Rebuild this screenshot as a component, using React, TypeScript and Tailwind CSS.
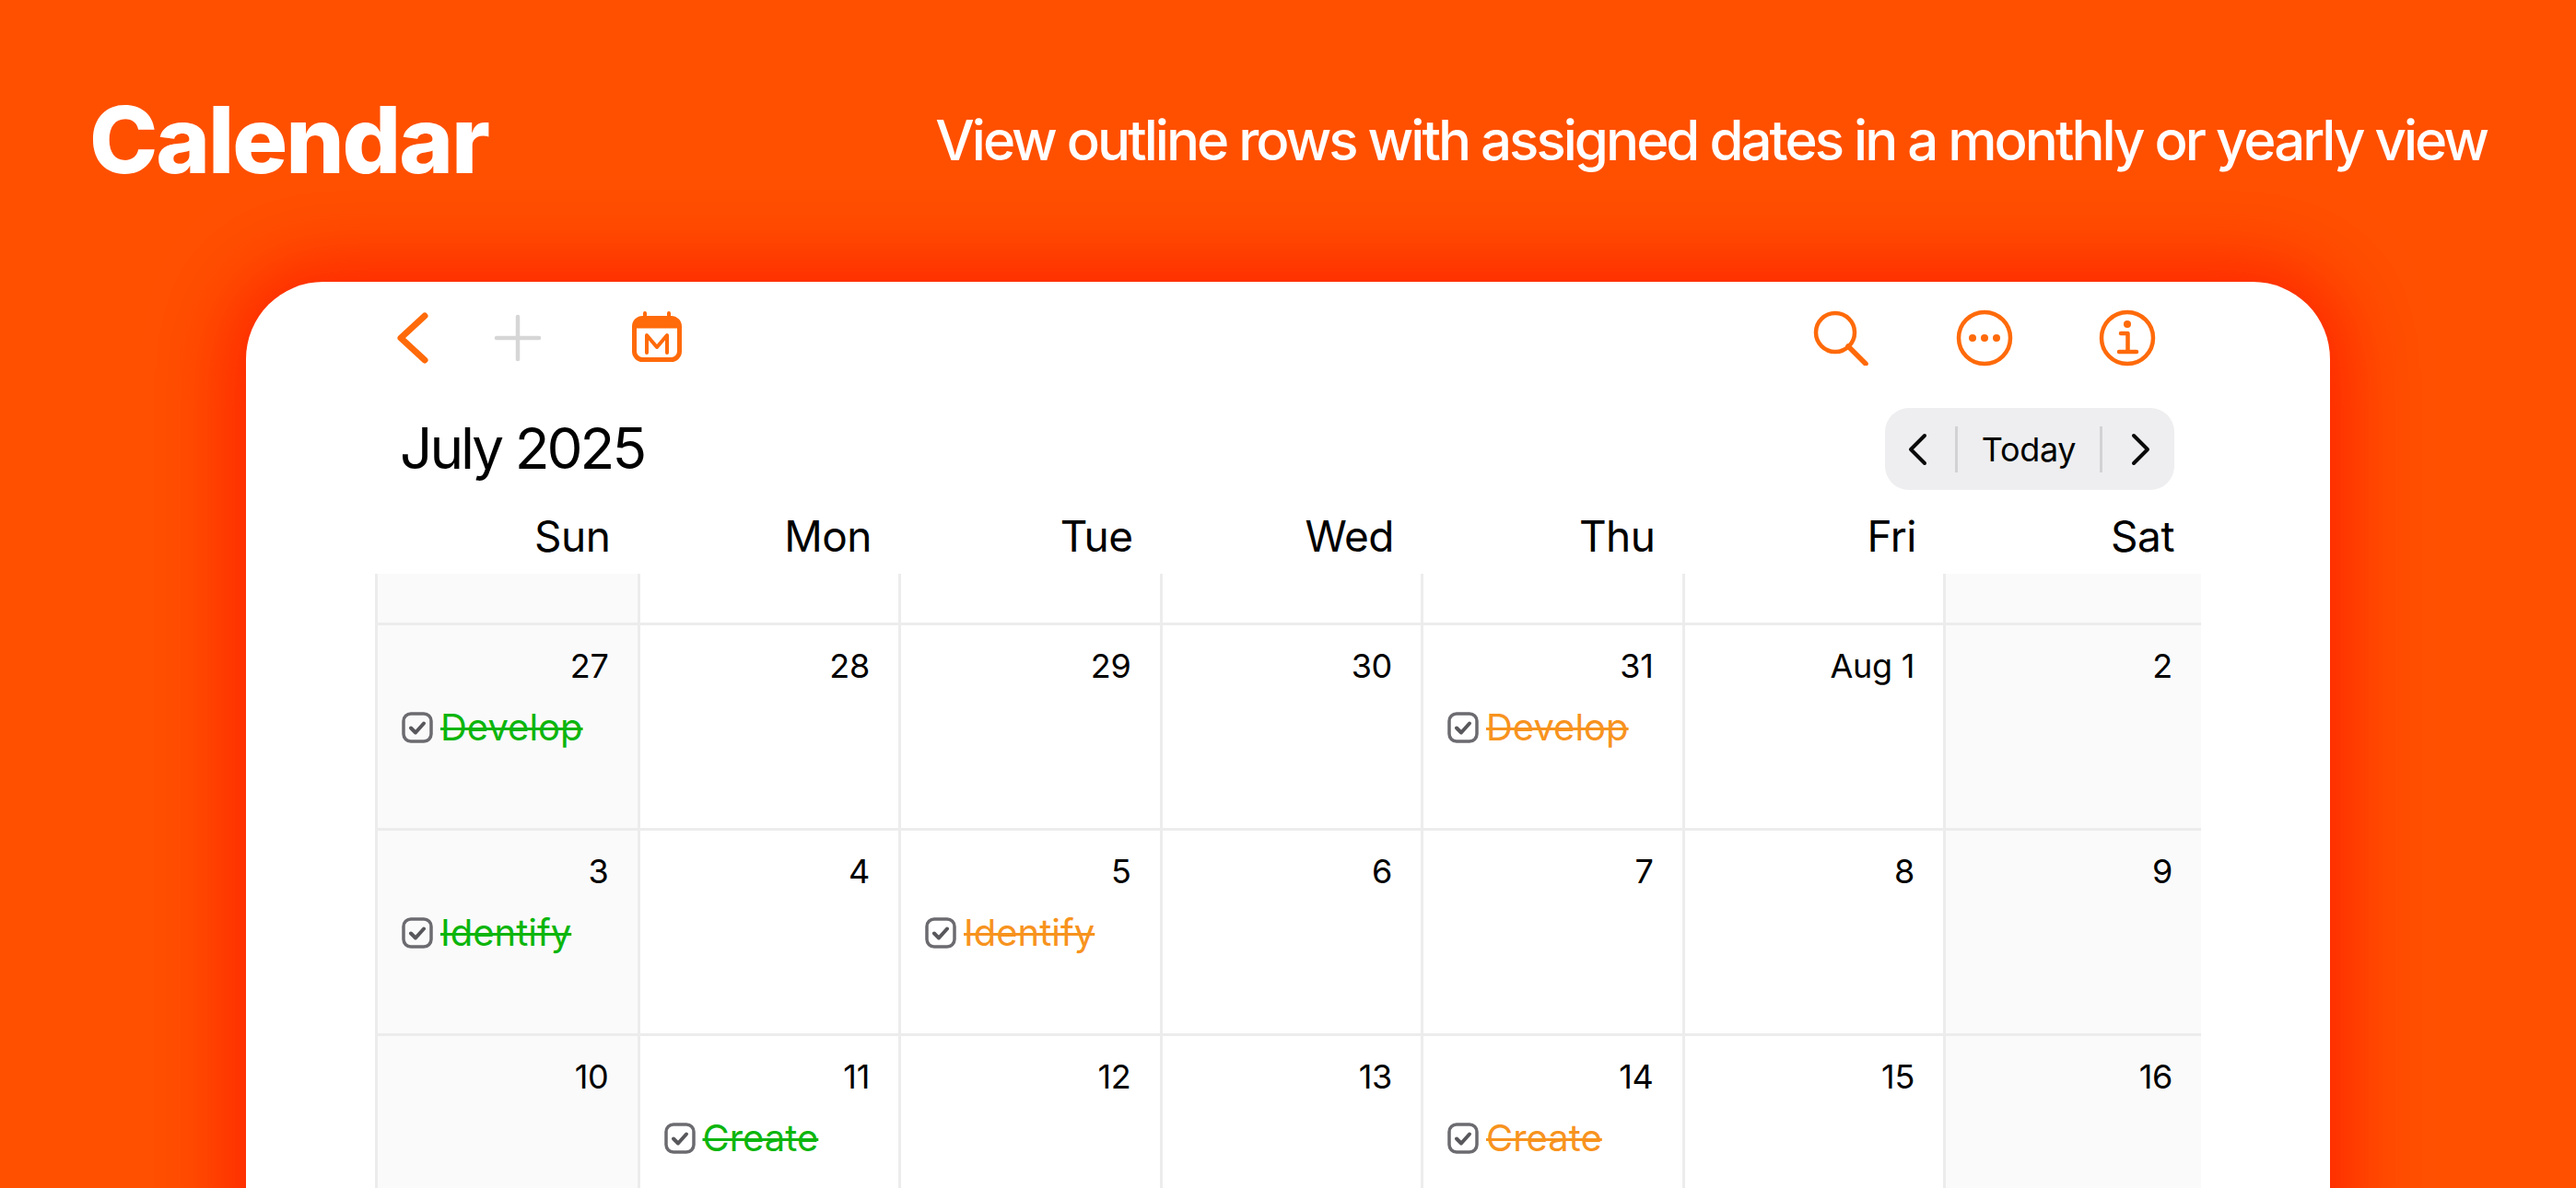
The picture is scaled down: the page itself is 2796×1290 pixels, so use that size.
import React from 'react';

type Task = { label: string; done: 'green' | 'orange' };
type Cell = { date: string; task?: Task };

const dayNames = ['Sun', 'Mon', 'Tue', 'Wed', 'Thu', 'Fri', 'Sat'];

const weeks: Cell[][] = [
  [
    { date: '27', task: { label: 'Develop', done: 'green' } },
    { date: '28' },
    { date: '29' },
    { date: '30' },
    { date: '31', task: { label: 'Develop', done: 'orange' } },
    { date: 'Aug 1' },
    { date: '2' },
  ],
  [
    { date: '3', task: { label: 'Identify', done: 'green' } },
    { date: '4' },
    { date: '5', task: { label: 'Identify', done: 'orange' } },
    { date: '6' },
    { date: '7' },
    { date: '8' },
    { date: '9' },
  ],
  [
    { date: '10' },
    { date: '11', task: { label: 'Create', done: 'green' } },
    { date: '12' },
    { date: '13' },
    { date: '14', task: { label: 'Create', done: 'orange' } },
    { date: '15' },
    { date: '16' },
  ],
];

function CheckBox() {
  return (
    <svg width="34" height="34" viewBox="0 0 34 34" fill="none" className="shrink-0">
      <rect x="2" y="2" width="30" height="30" rx="8" stroke="#6b6b70" strokeWidth="3.5" />
      <path d="M10 17.5l5 5 9-10" stroke="#58585c" strokeWidth="4" strokeLinecap="round" strokeLinejoin="round" />
    </svg>
  );
}

function DayCell({ cell, weekend }: { cell: Cell; weekend: boolean }) {
  return (
    <div className={`h-[223px] border-l-[3px] border-t-[3px] border-[#ececec] pt-[22px] pr-[31px] pl-[26px] ${weekend ? 'bg-[#fafafa]' : 'bg-white'}`}>
      <div className="text-right text-[36px] leading-[44px] text-black tracking-[-0.3px]">{cell.date}</div>
      {cell.task && (
        <div className="mt-[22px] flex items-center gap-[8px]">
          <CheckBox />
          <span className={`text-[40px] leading-[46px] line-through decoration-[3px] ${cell.task.done === 'green' ? 'text-[#0db50d]' : 'text-[#f7931e]'}`}>
            {cell.task.label}
          </span>
        </div>
      )}
    </div>
  );
}

export default function App() {
  return (
    <div className="h-[1290px] w-[2796px] overflow-hidden bg-[#ff5000] [font-family:Inter,sans-serif]">
      <header className="flex h-[306px] items-center justify-between pb-[3px] pl-[97px] pr-[97px] text-white">
        <h1 className="text-[100px] font-extrabold leading-none tracking-[-2.1px]">Calendar</h1>
        <p className="text-[60px] font-medium leading-none tracking-[-3px]">View outline rows with assigned dates in a monthly or yearly view</p>
      </header>

      <div className="ml-[267px] h-[1100px] w-[2262px] rounded-t-[84px] bg-white pl-[140px] pr-[140px] shadow-[0_0_80px_20px_#ff2400]">
        {/* toolbar */}
        <div className="flex h-[122px] items-center justify-between">
          <div className="flex items-center">
            <svg width="36" height="56" viewBox="0 0 36 56" fill="none" className="ml-[23px]">
              <path d="M31 4L5 28l26 24" stroke="#ff6a0a" strokeWidth="7" strokeLinecap="round" strokeLinejoin="round" />
            </svg>
            <svg width="52" height="52" viewBox="0 0 52 52" fill="none" className="ml-[70px]">
              <path d="M26 3v46M3 26h46" stroke="#d6d6d6" strokeWidth="4.5" strokeLinecap="round" />
            </svg>
            <svg width="54" height="58" viewBox="0 0 54 58" fill="none" className="ml-[98px]">
              <rect x="2.500" y="7.500" width="49" height="45" rx="9" stroke="#ff6a0a" strokeWidth="5" />
              <path d="M2.500 16.500a9 9 0 0 1 9-9h31a9 9 0 0 1 9 9v2h-49z" fill="#ff6a0a" />
              <path d="M14 2v8M40 2v8" stroke="#ff6a0a" strokeWidth="4" strokeLinecap="round" />
              <path d="M16 45V26l11 13 11-13v19" stroke="#ff6a0a" strokeWidth="4" strokeLinecap="round" strokeLinejoin="round" />
            </svg>
          </div>
          <div className="flex items-center pr-[49px]">
            <svg width="60" height="60" viewBox="0 0 60 60" fill="none" className="mr-[2px]">
              <circle cx="24" cy="24" r="21" stroke="#ff6a0a" strokeWidth="4.5" />
              <path d="M38 39l19 19" stroke="#ff6a0a" strokeWidth="5.5" strokeLinecap="round" />
            </svg>
            <svg width="62" height="62" viewBox="0 0 62 62" fill="none" className="ml-[93px]">
              <circle cx="31" cy="31" r="28" stroke="#ff6a0a" strokeWidth="4.5" />
              <circle cx="18" cy="31" r="4" fill="#ff6a0a" />
              <circle cx="31" cy="31" r="4" fill="#ff6a0a" />
              <circle cx="44" cy="31" r="4" fill="#ff6a0a" />
            </svg>
            <svg width="62" height="62" viewBox="0 0 62 62" fill="none" className="ml-[93px]">
              <circle cx="31" cy="31" r="28" stroke="#ff6a0a" strokeWidth="4.5" />
              <circle cx="31" cy="16" r="4" fill="#ff6a0a" />
              <path d="M24 26h7.500v20M22 46h19" stroke="#ff6a0a" strokeWidth="4.500" strokeLinecap="round" strokeLinejoin="round" />
            </svg>
          </div>
        </div>

        {/* month title and stepper */}
        <div className="flex h-[117px] items-start justify-between pl-[27px] pr-[29px] pt-[15px]">
          <h2 className="text-[62px] leading-[88px] text-black tracking-[-3px]">July 2025</h2>
          <div className="flex h-[89px] w-[314px] items-center rounded-[26px] bg-[#eeeef0]">
            <div className="flex w-[76px] justify-center pr-[6px]">
              <svg width="22" height="36" viewBox="0 0 22 36" fill="none">
                <path d="M19 3L4 18l15 15" stroke="#0a0a0a" strokeWidth="4" strokeLinecap="round" strokeLinejoin="round" />
              </svg>
            </div>
            <div className="h-[50px] w-[3px] bg-[#d2d2d4]" />
            <div className="flex-1 text-center text-[36px] tracking-[-0.3px] text-black">Today</div>
            <div className="h-[50px] w-[3px] bg-[#d2d2d4]" />
            <div className="flex w-[78px] justify-center pl-[6px]">
              <svg width="22" height="36" viewBox="0 0 22 36" fill="none">
                <path d="M3 3l15 15L3 33" stroke="#0a0a0a" strokeWidth="4" strokeLinecap="round" strokeLinejoin="round" />
              </svg>
            </div>
          </div>
        </div>

        {/* weekday header */}
        <div className="grid h-[78px] w-[1982px] grid-cols-[284.5px_repeat(5,283.5px)_1fr]">
          {dayNames.map((name) => (
            <div key={name} className="pr-[29px] text-right text-[46px] leading-[74px] tracking-[-0.5px] text-black">{name}</div>
          ))}
        </div>

        {/* month grid, scrolled so the previous week is cut off */}
        <div className="grid w-[1982px] grid-cols-[284.5px_repeat(5,283.5px)_1fr]">
          {dayNames.map((name, i) => (
            <div key={name} className={`h-[53px] border-l-[3px] border-[#ececec] ${i === 0 || i === 6 ? 'bg-[#fafafa]' : 'bg-white'}`} />
          ))}
          {weeks.flatMap((week, w) =>
            week.map((cell, i) => (
              <DayCell key={`${w}-${i}`} cell={cell} weekend={i === 0 || i === 6} />
            ))
          )}
        </div>
      </div>
    </div>
  );
}
